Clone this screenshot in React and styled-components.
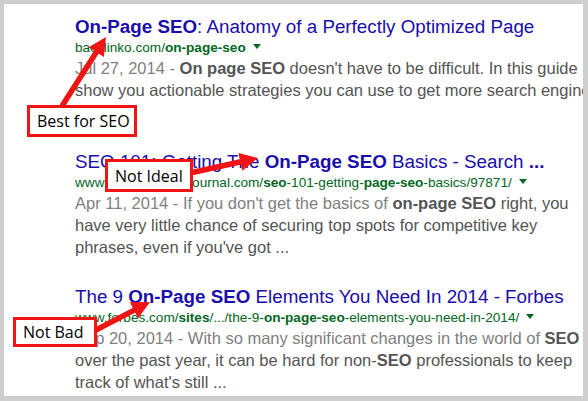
import React from 'react'
import styled, { createGlobalStyle } from 'styled-components'

const GlobalStyle = createGlobalStyle`
  html, body { margin: 0; padding: 0; background: #fff; }
  body { font-family: Arial, "Liberation Sans", sans-serif; }
`

const results = [
  {
    title: [['On-Page SEO', true], [': Anatomy of a Perfectly Optimized Page', false]],
    url: [['backlinko.com/', false], ['on-page-seo', true]],
    date: 'Jul 27, 2014',
    lines: [
      [[' - ', false], ['On page SEO', true], [" doesn't have to be difficult. In this guide I'll", false]],
      [['show you actionable strategies you can use to get more search engine', false]],
    ],
  },
  {
    title: [['SEO 101: Getting The ', false], ['On-Page SEO', true], [' Basics - Search ', false], ['...', true]],
    url: [['www.searchenginejournal.com/', false], ['seo', true], ['-101-getting-', false], ['page-seo', true], ['-basics/97871/', false]],
    date: 'Apr 11, 2014',
    lines: [
      [[" - If you don't get the basics of ", false], ['on-page SEO', true], [' right, you', false]],
      [['have very little chance of securing top spots for competitive key', false]],
      [["phrases, even if you've got ...", false]],
    ],
  },
  {
    title: [['The 9 ', false], ['On-Page SEO', true], [' Elements You Need In 2014 - Forbes', false]],
    url: [['www.forbes.com/', false], ['sites', true], ['/.../the-9-', false], ['on-page-seo', true], ['-elements-you-need-in-2014/', false]],
    date: 'Sep 20, 2014',
    lines: [
      [[' - With so many significant changes in the world of ', false], ['SEO', true], [' in', false]],
      [['over the past year, it can be hard for non-', false], ['SEO', true], [' professionals to keep', false]],
      [["track of what's still ...", false]],
    ],
  },
]

const callouts = [
  { label: 'Best for SEO', left: 27, top: 105, width: 110, height: 32, from: [62, 106], to: [106, 37] },
  { label: 'Not Ideal', left: 105, top: 159, width: 88, height: 33, from: [190, 173], to: [258, 158] },
  { label: 'Not Bad', left: 13, top: 317, width: 84, height: 30, from: [94, 331], to: [150, 302] },
]

function arrowHead([x1, y1], [x2, y2], len = 18, half = 9) {
  const dx = x2 - x1
  const dy = y2 - y1
  const d = Math.hypot(dx, dy)
  const ux = dx / d
  const uy = dy / d
  const bx = x2 - ux * len
  const by = y2 - uy * len
  return `${x2},${y2} ${bx - uy * half},${by + ux * half} ${bx + uy * half},${by - ux * half}`
}

function shaftEnd([x1, y1], [x2, y2], len = 15) {
  const d = Math.hypot(x2 - x1, y2 - y1)
  return [x2 - ((x2 - x1) / d) * len, y2 - ((y2 - y1) / d) * len]
}

export default function App() {
  return (
    <>
      <GlobalStyle />
      <Frame>
        <ResultList>
          {results.map((r, i) => (
            <Result key={i}>
              <Title>
                {r.title.map(([t, b], j) => (b ? <b key={j}>{t}</b> : <span key={j}>{t}</span>))}
              </Title>
              <Url>
                {r.url.map(([t, b], j) => (b ? <b key={j}>{t}</b> : <span key={j}>{t}</span>))}
                <Caret />
              </Url>
              <Snippet>
                {r.lines.map((line, j) => (
                  <Line key={j}>
                    {j === 0 && <DateText>{r.date}</DateText>}
                    {line.map(([t, b], k) =>
                      j === 0 && k === 0 ? <DateText key={k}>{t}</DateText> : b ? <b key={k}>{t}</b> : <span key={k}>{t}</span>
                    )}
                  </Line>
                ))}
              </Snippet>
            </Result>
          ))}
        </ResultList>

        <Arrows viewBox="0 0 588 401" width="588" height="401">
          {callouts.map((c, i) => {
            const [ex, ey] = shaftEnd(c.from, c.to)
            return (
              <g key={i} fill="#f01414" stroke="#f01414">
                <line x1={c.from[0]} y1={c.from[1]} x2={ex} y2={ey} strokeWidth="5.5" />
                <polygon points={arrowHead(c.from, c.to)} stroke="none" />
              </g>
            )
          })}
        </Arrows>

        {callouts.map((c, i) => (
          <Callout key={i} $left={c.left} $top={c.top} $w={c.width} $h={c.height}>
            {c.label}
          </Callout>
        ))}
      </Frame>
    </>
  )
}

const Frame = styled.div`
  position: relative;
  width: 588px;
  height: 401px;
  box-sizing: border-box;
  border-style: solid;
  border-color: #cecece;
  border-width: 4px 5px 5px 4px;
  background: #fff;
  overflow: hidden;
`

const ResultList = styled.div`
  display: flex;
  flex-direction: column;
  gap: 28px;
  padding: 12px 0 0 71px;
`

const Result = styled.div`
  display: flex;
  flex-direction: column;
`

const Title = styled.div`
  font-size: 18.8px;
  line-height: 22px;
  color: #1a0dab;
  white-space: nowrap;
  b { font-weight: 700; }
`

const Url = styled.div`
  display: flex;
  align-items: center;
  font-size: 13.6px;
  line-height: 19px;
  color: #006621;
  white-space: nowrap;
  b { font-weight: 700; }
`

const Caret = styled.span`
  width: 0;
  height: 0;
  margin-left: 7px;
  margin-top: -2px;
  border-left: 4px solid transparent;
  border-right: 4px solid transparent;
  border-top: 5px solid #006621;
`

const Snippet = styled.div`
  min-height: 66px;
  font-size: 16.5px;
  line-height: 22px;
  color: #545454;
  b { font-weight: 700; }
`

const Line = styled.div`
  white-space: nowrap;
`

const DateText = styled.span`
  color: #808080;
`

const Arrows = styled.svg`
  position: absolute;
  left: -4px;
  top: -4px;
  pointer-events: none;
`

const Callout = styled.div`
  position: absolute;
  left: ${p => p.$left - 4}px;
  top: ${p => p.$top - 4}px;
  width: ${p => p.$w}px;
  height: ${p => p.$h}px;
  box-sizing: border-box;
  border: 3px solid #f01414;
  background: #fff;
  display: flex;
  align-items: center;
  padding-left: 7px;
  font-family: "Open Sans", "Noto Sans", sans-serif;
  font-size: 16px;
  color: #000;
  white-space: nowrap;
`
